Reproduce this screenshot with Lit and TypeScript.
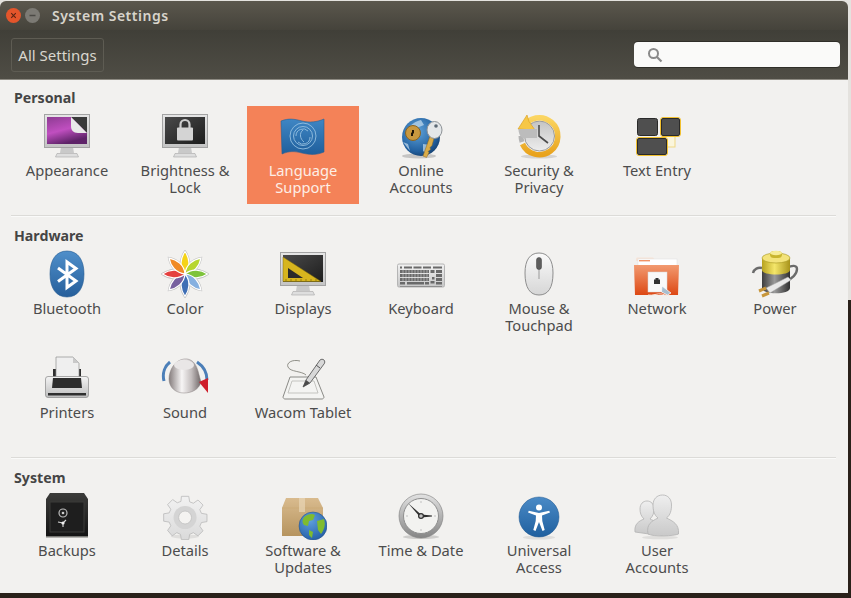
import { LitElement, html, css, svg } from 'lit';
import { customElement } from 'lit/decorators.js';

// shared gradients live in one zero sized svg, the icons point at them by id
const defs = html`<svg class="defs" aria-hidden="true">
  <defs>
    <linearGradient id="frame" x1="0" y1="0" x2="0" y2="1"><stop offset="0" stop-color="#e6e6e6"/><stop offset="1" stop-color="#c4c4c4"/></linearGradient>
    <linearGradient id="purple" x1="0" y1="0" x2="0.4" y2="1"><stop offset="0" stop-color="#8d3b92"/><stop offset="0.55" stop-color="#c04fc0"/><stop offset="1" stop-color="#5e2368"/></linearGradient>
    <linearGradient id="darkscreen" x1="0" y1="0" x2="1" y2="1"><stop offset="0" stop-color="#4a4a4a"/><stop offset="1" stop-color="#1d1d1d"/></linearGradient>
    <linearGradient id="flag" x1="0" y1="0" x2="0" y2="1"><stop offset="0" stop-color="#3f86c4"/><stop offset="1" stop-color="#1f5f9c"/></linearGradient>
    <radialGradient id="globe" cx="0.4" cy="0.35" r="0.75"><stop offset="0" stop-color="#5fa3da"/><stop offset="0.7" stop-color="#22609f"/><stop offset="1" stop-color="#123660"/></radialGradient>
    <linearGradient id="gold" x1="0" y1="0" x2="0" y2="1"><stop offset="0" stop-color="#fbd561"/><stop offset="1" stop-color="#e8a21c"/></linearGradient>
    <linearGradient id="clockface" x1="0" y1="0" x2="0" y2="1"><stop offset="0" stop-color="#c4c4c4"/><stop offset="1" stop-color="#ededed"/></linearGradient>
    <linearGradient id="btblue" x1="0" y1="0" x2="0" y2="1"><stop offset="0" stop-color="#4f8fca"/><stop offset="1" stop-color="#265f9b"/></linearGradient>
    <linearGradient id="keybody" x1="0" y1="0" x2="0" y2="1"><stop offset="0" stop-color="#f2f2f2"/><stop offset="1" stop-color="#c6c6c6"/></linearGradient>
    <linearGradient id="mouse" x1="0" y1="0" x2="0" y2="1"><stop offset="0" stop-color="#fafafa"/><stop offset="1" stop-color="#d6d6d6"/></linearGradient>
    <linearGradient id="folder" x1="0" y1="0" x2="0" y2="1"><stop offset="0" stop-color="#f29a70"/><stop offset="1" stop-color="#dd4814"/></linearGradient>
    <linearGradient id="batt" x1="0" y1="0" x2="1" y2="0"><stop offset="0" stop-color="#3d3d3d"/><stop offset="0.45" stop-color="#9a9a9a"/><stop offset="1" stop-color="#2f2f2f"/></linearGradient>
    <linearGradient id="battop" x1="0" y1="0" x2="1" y2="0"><stop offset="0" stop-color="#b7a21f"/><stop offset="0.45" stop-color="#f4e66a"/><stop offset="1" stop-color="#a8931a"/></linearGradient>
    <linearGradient id="printer" x1="0" y1="0" x2="0" y2="1"><stop offset="0" stop-color="#f4f4f4"/><stop offset="1" stop-color="#bdbdbd"/></linearGradient>
    <linearGradient id="knob" x1="0" y1="0" x2="1" y2="0"><stop offset="0" stop-color="#857d7d"/><stop offset="0.4" stop-color="#f7f5f5"/><stop offset="0.7" stop-color="#c4bebe"/><stop offset="1" stop-color="#6f6767"/></linearGradient>
    <linearGradient id="safe" x1="0" y1="0" x2="0" y2="1"><stop offset="0" stop-color="#3c3c3a"/><stop offset="1" stop-color="#141414"/></linearGradient>
    <linearGradient id="gear" x1="0" y1="0" x2="0" y2="1"><stop offset="0" stop-color="#f2f2f2"/><stop offset="1" stop-color="#dadada"/></linearGradient>
    <linearGradient id="box" x1="0" y1="0" x2="0" y2="1"><stop offset="0" stop-color="#d9bb8e"/><stop offset="1" stop-color="#b6945f"/></linearGradient>
    <radialGradient id="earth" cx="0.4" cy="0.3" r="0.8"><stop offset="0" stop-color="#5f9fdc"/><stop offset="1" stop-color="#1f5aa3"/></radialGradient>
    <linearGradient id="rim" x1="0" y1="0" x2="0" y2="1"><stop offset="0" stop-color="#e2e2e2"/><stop offset="1" stop-color="#858585"/></linearGradient>
    <linearGradient id="ua" x1="0" y1="0" x2="0" y2="1"><stop offset="0" stop-color="#4a8ac6"/><stop offset="1" stop-color="#20609f"/></linearGradient>
    <linearGradient id="bust" x1="0" y1="0" x2="0" y2="1"><stop offset="0" stop-color="#efefef"/><stop offset="1" stop-color="#c9c9c9"/></linearGradient>
  </defs>
</svg>`;

const monitor = (screen: unknown) => svg`
  <path d="M18 35h12l1 6H17z" fill="#c9c9c9"/>
  <path d="M14 41.5h20l1.5 3.5h-23z" fill="#dedede" stroke="#a6a6a6" stroke-width=".6"/>
  <rect x="1.5" y="2.5" width="45" height="33" fill="url(#frame)" stroke="#a3a3a3"/>
  ${screen}
`;

const petals = ['#f5d317', '#b7d62e', '#7ec33b', '#86b0e0', '#3f6fb5', '#77609f', '#e5403f', '#f08a24'];
const petal = 'M24 24C18 17 19.500 8 24 1.500 28.500 8 30 17 24 24z';

const icons: Record<string, unknown> = {
  appearance: monitor(svg`
    <rect x="4" y="5" width="40" height="27" fill="url(#purple)"/>
    <path d="M28 5h16v16z" fill="#3a3a3a"/>
    <path d="M28 5l16 16h-9c-5 0-7-3-7-7z" fill="#e9e9e9"/>
  `),
  brightness: monitor(svg`
    <rect x="4" y="5" width="40" height="27" fill="url(#darkscreen)"/>
    <path d="M19.5 16v-3.500a4.500 4.500 0 0 1 9 0V16" fill="none" stroke="#cfcfcf" stroke-width="2.2"/>
    <rect x="16" y="15.500" width="16" height="13" rx="1" fill="#d4d4d4"/>
  `),
  language: svg`
    <path d="M2 9c8-3 13-2 21 0s15 1 22-2v33c-7 3-14 3-22 1S10 39 3 42z" fill="url(#flag)" stroke="#2a5f92" stroke-width=".6"/>
    <g fill="none" stroke="#9cc5e4" stroke-width="1" opacity=".85">
      <circle cx="24" cy="24" r="13"/><circle cx="24" cy="24" r="9.500"/>
      <path d="M17 24a7 7 0 0 1 12-5M31 25a7 7 0 0 1-12 5"/>
      <path d="M24 18c-4 3-3 9 1 12"/>
    </g>`,
  online: svg`
    <ellipse cx="22" cy="44" rx="17" ry="2.500" fill="#000" opacity=".18"/>
    <circle cx="24" cy="25" r="19" fill="url(#globe)"/>
    <path d="M10 18c4-6 9-9 14-10l3 5-5 2-8 1zM26 32l8 1-4 9-4-3zM6 30l5 2 2 7z" fill="#c6ddee" opacity=".7"/>
    <circle cx="16" cy="21" r="7.500" fill="#c8983f" stroke="#8a6420"/>
    <path d="M16 18v2.500l-1 1v2.500" stroke="#201608" stroke-width="2" fill="none"/>
    <path d="M33 24l-7 20 3.500 1.500 2.500-5-1-1 2.500-2-.5-2 2-2 2.500-9z" fill="#d9ac4a" stroke="#8a6420" stroke-width=".5"/>
    <ellipse cx="37.500" cy="18" rx="7.500" ry="8.500" fill="#e4e7e9" stroke="#8d9296"/>
    <circle cx="39" cy="14" r="1.800" fill="#5d6a75"/>`,
  security: svg`
    <ellipse cx="24" cy="44.500" rx="18" ry="2" fill="#000" opacity=".12"/>
    <circle cx="24.500" cy="24" r="15" fill="url(#clockface)" stroke="#999"/>
    <path d="M6 24a18.500 18.500 0 0 0 1 6" fill="none" stroke="#b4b4b4" stroke-width="5"/>
    <path d="M8 15.500A18.500 18.500 0 1 1 7.500 32" fill="none" stroke="url(#gold)" stroke-width="5.500"/>
    <path d="M3 17L12 3l2 6.500 6 8.500z" fill="#f6c747" stroke="#d79a1c" stroke-width=".6"/>
    <path d="M3.500 17H22v9H8c-3-1-4.500-5-4.500-9z" fill="#bcbcbc"/>
    <path d="M24 13v11l9 7" fill="none" stroke="#4d4d4d" stroke-width="1.600"/>`,
  textentry: svg`
    <rect x="30" y="24" width="12" height="11" fill="#fbf6dc" stroke="#efd986"/>
    <rect x="4.500" y="6.500" width="20" height="17" rx="2" fill="#4f4f4f" stroke="#2a2a2a"/>
    <rect x="27.500" y="5.500" width="20" height="19" rx="2.500" fill="none" stroke="#f1c02f"/>
    <rect x="28.500" y="6.500" width="18" height="17" rx="1.500" fill="#4f4f4f" stroke="#2a2a2a"/>
    <rect x="3.500" y="25.500" width="31" height="18" rx="2.500" fill="none" stroke="#f1c02f"/>
    <rect x="4.500" y="26.500" width="29" height="16" rx="1.500" fill="#4f4f4f" stroke="#2a2a2a"/>`,
  bluetooth: svg`
    <path d="M24 1c11 0 17 9 17 23s-6 23-17 23S7 38 7 24 13 1 24 1z" fill="url(#btblue)" stroke="#245a92" stroke-width=".6"/>
    <path d="M15 18l18 13-9 6.500V12l9 6.500-18 13" fill="none" stroke="#fff" stroke-width="3"/>`,
  color: svg`
    ${petals.map((_, i) => svg`<path d="${petal}" fill="#c9c9c9" stroke="#bdbdbd" stroke-width="2.200" transform="rotate(${i * 45} 24 24)"/>`)}
    ${petals.map((c, i) => svg`<path d="${petal}" fill="${c}" stroke="#fff" stroke-width="1.200" transform="rotate(${i * 45} 24 24)"/>`)}`,
  displays: monitor(svg`
    <rect x="4" y="5" width="40" height="27" fill="url(#darkscreen)"/>
    <path d="M4 7l38 24.500H4z" fill="#d7b51e" stroke="#7d6a10" stroke-width=".5"/>
    <path d="M9 18l15 10H9z" fill="#2a2a2a"/>
    <path d="M7 31v-2M12 31v-2M17 31v-2M22 31v-2M27 31v-2M32 31v-2M37 31v-2" stroke="#6b5a0c" stroke-width=".6"/>
  `),
  keyboard: svg`
    <rect x=".5" y="14" width="47" height="23" rx="1.500" fill="url(#keybody)" stroke="#b5b5b5"/>
    <path d="M3 36.500h42" stroke="#8e8e8e"/>
    <g fill="#6a6a6a">
      <rect x="3" y="16.500" width="2" height="2"/>
      <rect x="7" y="16.500" width="8" height="2"/><rect x="16.500" y="16.500" width="8" height="2"/><rect x="26" y="16.500" width="8" height="2"/><rect x="36" y="16.500" width="9" height="2"/>
      <rect x="3" y="20" width="29" height="3"/><rect x="33.500" y="20" width="4" height="3"/><rect x="39" y="20" width="6" height="3"/>
      <rect x="3" y="24" width="29" height="3"/><rect x="39" y="24" width="6" height="3"/>
      <rect x="3" y="28" width="29" height="3"/><rect x="35" y="27" width="2.500" height="2.500"/><rect x="39" y="28" width="6" height="3"/>
      <rect x="3" y="32" width="5" height="2.500"/><rect x="10" y="32" width="17" height="2.500"/><rect x="28" y="32" width="4" height="2.500"/><rect x="33.500" y="31" width="4" height="2.500"/><rect x="39" y="32" width="6" height="2.500"/>
    </g>
    <path d="M6 20v11M9 20v11M12 20v11M15 20v11M18 20v11M21 20v11M24 20v11M27 20v11M30 20v11" stroke="#e9e9e9" stroke-width=".5"/>`,
  mouse: svg`
    <path d="M24 3c9 0 14 7 14 20 0 15-5 22-14 22s-14-7-14-22C10 10 15 3 24 3z" fill="url(#mouse)" stroke="#8e8e8e"/>
    <path d="M24 19v10" stroke="#7a7a7a" stroke-width=".7"/>
    <rect x="21.500" y="7.500" width="5" height="12" rx="2.500" fill="#5e5e5e" stroke="#3f3f3f" stroke-width=".5"/>`,
  network: svg`
    <path d="M3 9c0-1 .5-1.500 1.500-1.500H20l3 3.500H3z" fill="#f6e4d8"/>
    <rect x="5" y="9" width="39" height="7" fill="#fff" stroke="#dfdfdf" stroke-width=".5"/>
    <rect x="6" y="10" width="11" height="1.400" fill="#f19366"/>
    <path d="M1 15h45l-1 30H2z" fill="url(#folder)"/>
    <rect x="15" y="22" width="19" height="20" fill="#f9f9f9" stroke="#d8d8d8" stroke-width=".5"/>
    <path d="M21 34v-4.500h1.500V28h3v1.500H27V34z" fill="#333"/>
    <path d="M15 45c4 1 10-2 14-1s5 2 7 1" fill="none" stroke="#f6e4d8"/>
    <path d="M29 36l9 7-3.500 2-6-3z" fill="#a8bfd0" stroke="#fff" stroke-width=".7"/>`,
  power: svg`
    <path d="M36 18c5-3 10-3 10 1 0 5-5 10-11 12M11 18c-4-1-8 1-9 5" fill="none" stroke="#6b6b6b" stroke-width="2.400"/>
    <path d="M11 8h28v30c0 7-28 7-28 0z" fill="url(#batt)"/>
    <path d="M11 8h28v12c0 6-28 6-28 0z" fill="url(#battop)"/>
    <ellipse cx="25" cy="8" rx="14" ry="5" fill="#f3e37a" stroke="#a4931f" stroke-width=".6"/>
    <rect x="19" y="1" width="12" height="7" rx="4" fill="#c9b52e"/>
    <ellipse cx="25" cy="3" rx="6" ry="2.200" fill="#f7ec97"/>
    <path d="M15 38l22-11 3 3-21 13z" fill="#e8e8e8" stroke="#a0a0a0" stroke-width=".5"/>
    <path d="M15 38l-7 3M18 43l-7 3" stroke="#c7963a" stroke-width="3"/>`,
  printers: svg`
    <path d="M10 15h3v8h-3zM35 15h3v8h-3z" fill="#2f2f2f"/>
    <path d="M13 3h17l6 6v17H13z" fill="#efefef" stroke="#8f8f8f" stroke-width=".7"/>
    <path d="M30 3v6h6z" fill="#c9c9c9"/>
    <rect x="2.500" y="22.500" width="43" height="21" rx="2.500" fill="url(#printer)" stroke="#8a8a8a" stroke-width=".7"/>
    <path d="M10 24h28l1 10H9z" fill="#2d2d2d"/>
    <rect x="5" y="39" width="38" height="2.500" fill="#2f2f2f"/>`,
  sound: svg`
    <path d="M3 27C1 19 4 12 9 8M46 26c0-8-4-14-10-18" fill="none" stroke="#4c7fb8" stroke-width="3"/>
    <path d="M8 25c0-9 6-19 15-20 8-1 12 5 14 12l3 11c-2 8-10 11-17 11C14 39 8 33 8 25z" fill="url(#knob)" stroke="#8d8484" stroke-width=".5"/>
    <ellipse cx="23" cy="11" rx="10" ry="5" fill="#e9e6e6"/>
    <path d="M38 28l9-4v15z" fill="#cf1f2b"/>`,
  wacom: svg`
    <path d="M11 23L4 43c0 1 1 2 2 2h37c1 0 2-1 2-2l-8-20z" fill="#f4f4f2" stroke="#8a8a86"/>
    <path d="M13 27l-4 12h30l-4-12z" fill="none" stroke="#c4c4c0"/>
    <path d="M21 7c-8-2-14 2-12 6 2 5 14 4 18 8" fill="none" stroke="#77776f" stroke-width=".8"/>
    <path d="M24 33l3-7L41 6c1-1 3-1 4 0s1 3 0 4L31 29z" fill="#d8d8d8" stroke="#4d4d4d" stroke-width=".8"/>
    <path d="M27 26l4 3-7 4z" fill="#4a4a4a"/>
    <path d="M37 11l4 3" stroke="#555"/>`,
  backups: svg`
    <path d="M3 7l4-6h34l4 6v37H3z" fill="url(#safe)"/>
    <path d="M3 44h42v1.500H3z" fill="#7a7a76"/>
    <rect x="7" y="10" width="34" height="30" fill="#1e1e1e" stroke="#3b3b39"/>
    <circle cx="20" cy="21" r="4" fill="#222" stroke="#bdbdbd" stroke-width="1.200"/>
    <circle cx="20" cy="21" r="1.300" fill="#cfcfcf"/>
    <path d="M20 31l-5-1M20 31l3-3M20 31v4" stroke="#d8d8d8" stroke-width="1.100"/>
    <circle cx="20" cy="31" r="1.600" fill="#f1f1f1"/>`,
  details: svg`
    <ellipse cx="24" cy="44.500" rx="14" ry="2" fill="#000" opacity=".08"/>
    <g transform="translate(2 2.500) scale(.92)">
      <path d="M20 2h8l1 6 4 1.500 5-3.500 5.500 5.500-3.500 5 1.800 4 6 1v8l-6 1-1.800 4 3.500 5-5.500 5.500-5-3.500-4 1.800-1 5.700h-8l-1-5.700-4-1.800-5 3.500L5 39l3.500-5-1.800-4-6-1v-8l6-1 1.800-4L5 11l5.500-5.500 5 3.500 4-1.500z" fill="url(#gear)" stroke="#b5b5b5" stroke-width=".8"/>
      <circle cx="24" cy="25" r="12.500" fill="#d4d4d4"/>
      <circle cx="24" cy="25" r="7" fill="#f4f3f1" stroke="#b8b8b8" stroke-width=".7"/>
    </g>`,
  software: svg`
    <path d="M7 6h32l5 10v28H3V16z" fill="url(#box)"/>
    <path d="M3 16h41" stroke="#c9a873" stroke-width=".6"/>
    <path d="M20 6h6v14h-6z" fill="#e8d6b6" opacity=".7"/>
    <circle cx="34" cy="34" r="14" fill="url(#earth)" stroke="#244f85" stroke-width=".5"/>
    <path d="M25 25c4-3 8-4 11-2l-2 5-4 1-1 5-4-1c-2-2-2-5 0-8zM38 29l7-2c2 6 0 11-3 15l-3-4zM30 38l4 2-1 6-3-3z" fill="#7fbb2f"/>`,
  time: svg`
    <ellipse cx="24" cy="45" rx="18" ry="2" fill="#000" opacity=".15"/>
    <circle cx="24" cy="24" r="22" fill="url(#rim)" stroke="#7c7c7c" stroke-width=".6"/>
    <circle cx="24" cy="24" r="17.500" fill="#f2f2f0" stroke="#8e8e8e"/>
    <path d="M24 22.500L11 11l12 14z" fill="#2f2f2f"/>
    <path d="M24 22.500l11 1v1l-11 1z" fill="#2f2f2f"/>
    <circle cx="24" cy="24" r="2.400" fill="#c4c4c4" stroke="#2f2f2f" stroke-width="1.200"/>
    <g fill="#b9b9b9"><circle cx="24" cy="10" r=".8"/><circle cx="38" cy="24" r=".8"/><circle cx="24" cy="38" r=".8"/><circle cx="10" cy="24" r=".8"/></g>`,
  universal: svg`
    <ellipse cx="24" cy="45.500" rx="16" ry="2" fill="#000" opacity=".08"/>
    <circle cx="24" cy="25" r="20" fill="url(#ua)" stroke="#1e578f" stroke-width=".5"/>
    <circle cx="24" cy="15.500" r="3" fill="#fff"/>
    <path d="M13 20.500l.8-1.800 10.200 2.300 10.200-2.300.8 1.800-8 3 .3 5.500 2.400 9-2.200.9-3.500-9-3.500 9-2.200-.9 2.400-9 .3-5.500z" fill="#fff"/>`,
  user: svg`
    <ellipse cx="27" cy="45.500" rx="18" ry="1.800" fill="#000" opacity=".08"/>
    <g fill="url(#bust)" stroke="#b2b2b2" stroke-width=".8">
      <path d="M2 40c-1-8 4-11 9-13-3-3-4-6-4-10 0-5 3-8 7-8s7 3 7 8c0 4-1 7-4 10 2 1 5 2 7 4l-8 11z"/>
      <path d="M15 42c-2-10 4-13 10-16-4-3-5-8-5-13 0-6 4-10 9.500-10s9 4 9 10c0 5-1 10-5 13 6 3 13 6 12 16-4 2-25 3-30.500 0z"/>
    </g>`,
};

interface Tile {
  icon: string;
  label: string;
  selected?: boolean;
}

const sections: { title: string; tiles: Tile[] }[] = [
  {
    title: 'Personal',
    tiles: [
      { icon: 'appearance', label: 'Appearance' },
      { icon: 'brightness', label: 'Brightness &\nLock' },
      { icon: 'language', label: 'Language\nSupport', selected: true },
      { icon: 'online', label: 'Online\nAccounts' },
      { icon: 'security', label: 'Security &\nPrivacy' },
      { icon: 'textentry', label: 'Text Entry' },
    ],
  },
  {
    title: 'Hardware',
    tiles: [
      { icon: 'bluetooth', label: 'Bluetooth' },
      { icon: 'color', label: 'Color' },
      { icon: 'displays', label: 'Displays' },
      { icon: 'keyboard', label: 'Keyboard' },
      { icon: 'mouse', label: 'Mouse &\nTouchpad' },
      { icon: 'network', label: 'Network' },
      { icon: 'power', label: 'Power' },
      { icon: 'printers', label: 'Printers' },
      { icon: 'sound', label: 'Sound' },
      { icon: 'wacom', label: 'Wacom Tablet' },
    ],
  },
  {
    title: 'System',
    tiles: [
      { icon: 'backups', label: 'Backups' },
      { icon: 'details', label: 'Details' },
      { icon: 'software', label: 'Software &\nUpdates' },
      { icon: 'time', label: 'Time & Date' },
      { icon: 'universal', label: 'Universal\nAccess' },
      { icon: 'user', label: 'User\nAccounts' },
    ],
  },
];

@customElement('app-root')
export class AppRoot extends LitElement {
  static styles = css`
    :host {
      display: block;
      width: 851px;
      height: 598px;
      overflow: hidden;
      font-family: 'Noto Sans', 'Open Sans', sans-serif;
      background: linear-gradient(#e4e2de 0 300px, #2a211a 300px);
    }

    .defs {
      display: block;
      width: 0;
      height: 0;
    }

    .window {
      width: 848px;
      height: 592px;
      margin-top: 1px;
      display: flex;
      flex-direction: column;
      border-radius: 6px 6px 0 0;
      overflow: hidden;
    }

    .titlebar {
      height: 29px;
      display: flex;
      align-items: center;
      background: linear-gradient(#5b574d, #45433b);
    }

    .btn {
      width: 15px;
      height: 15px;
      display: block;
    }

    .close {
      margin-left: 6px;
    }

    .min {
      margin-left: 4px;
    }

    .title {
      margin-left: 12px;
      color: #d8d4cb;
      font-size: 14px;
      font-weight: 600;
      letter-spacing: 0.5px;
    }

    .toolbar {
      height: 50px;
      box-sizing: border-box;
      display: flex;
      align-items: center;
      justify-content: space-between;
      padding: 0 8px 0 11px;
      background: linear-gradient(#403f38, #4f4d45);
      border-bottom: 1px solid #8d8a82;
    }

    .back {
      width: 93px;
      height: 34px;
      box-sizing: border-box;
      display: flex;
      align-items: center;
      justify-content: center;
      border: 1px solid #5e5c53;
      border-radius: 3px;
      color: #d9d6ce;
      font-size: 15px;
    }

    .search {
      width: 206px;
      height: 25px;
      box-sizing: border-box;
      display: flex;
      align-items: center;
      padding-left: 13px;
      background: #fafaf9;
      border-radius: 4px;
      box-shadow: 0 -1px 0 #2f2e29, 0 1px 0 #2f2e29;
    }

    .content {
      flex: 1;
      background: #f2f1ef;
      padding-top: 10px;
      color: #4c4c4c;
    }

    .section + .section {
      margin-top: 11px;
      padding-top: 13px;
      position: relative;
    }

    .section + .section::before {
      content: '';
      position: absolute;
      top: 0;
      left: 11px;
      width: 825px;
      height: 1px;
      background: #dcdbd8;
      box-shadow: 0 1px 0 #fafaf9;
    }

    h2 {
      margin: 0 0 0 14px;
      font-size: 14.2px;
      line-height: 16px;
      font-weight: 700;
      color: #454545;
    }

    .grid {
      display: grid;
      grid-template-columns: repeat(7, 112px);
      grid-auto-rows: 98px;
      gap: 6px;
      padding-left: 11px;
    }

    .tile {
      display: flex;
      flex-direction: column;
      align-items: center;
      padding-top: 6px;
      box-sizing: border-box;
      text-align: center;
      font-size: 14.7px;
      line-height: 17px;
    }

    .tile svg {
      width: 48px;
      height: 48px;
      flex: none;
      display: block;
    }

    .label {
      margin-top: 2px;
      white-space: pre-line;
    }

    .tile.selected {
      background: #f48258;
      color: #fdeee6;
    }
  `;

  render() {
    return html`
      ${defs}
      <div class="window">
        <div class="titlebar">
          <svg class="btn close" viewBox="0 0 15 15"><circle cx="7.500" cy="7.500" r="7.500" fill="#e4552b"/><path d="M5.200 5.200l4.600 4.600M9.800 5.200l-4.600 4.600" stroke="#5a2413" stroke-width="1.100"/></svg>
          <svg class="btn min" viewBox="0 0 15 15"><circle cx="7.500" cy="7.500" r="7.500" fill="#7c7a74"/><path d="M4.500 7.500h6" stroke="#4b4a45" stroke-width="1.300"/></svg>
          <span class="title">System Settings</span>
        </div>
        <div class="toolbar">
          <div class="back">All Settings</div>
          <div class="search">
            <svg width="16" height="16" viewBox="0 0 16 16"><circle cx="6.500" cy="6.500" r="4.500" fill="none" stroke="#8a8a8a" stroke-width="2"/><path d="M10 10l4.500 4.500" stroke="#8a8a8a" stroke-width="2.200"/></svg>
          </div>
        </div>
        <div class="content">
          ${sections.map(s => html`
            <div class="section">
              <h2>${s.title}</h2>
              <div class="grid">
                ${s.tiles.map(t => html`
                  <div class="tile ${t.selected ? 'selected' : ''}">
                    <svg viewBox="0 0 48 48">${icons[t.icon]}</svg>
                    <div class="label">${t.label}</div>
                  </div>
                `)}
              </div>
            </div>
          `)}
        </div>
      </div>
    `;
  }
}
